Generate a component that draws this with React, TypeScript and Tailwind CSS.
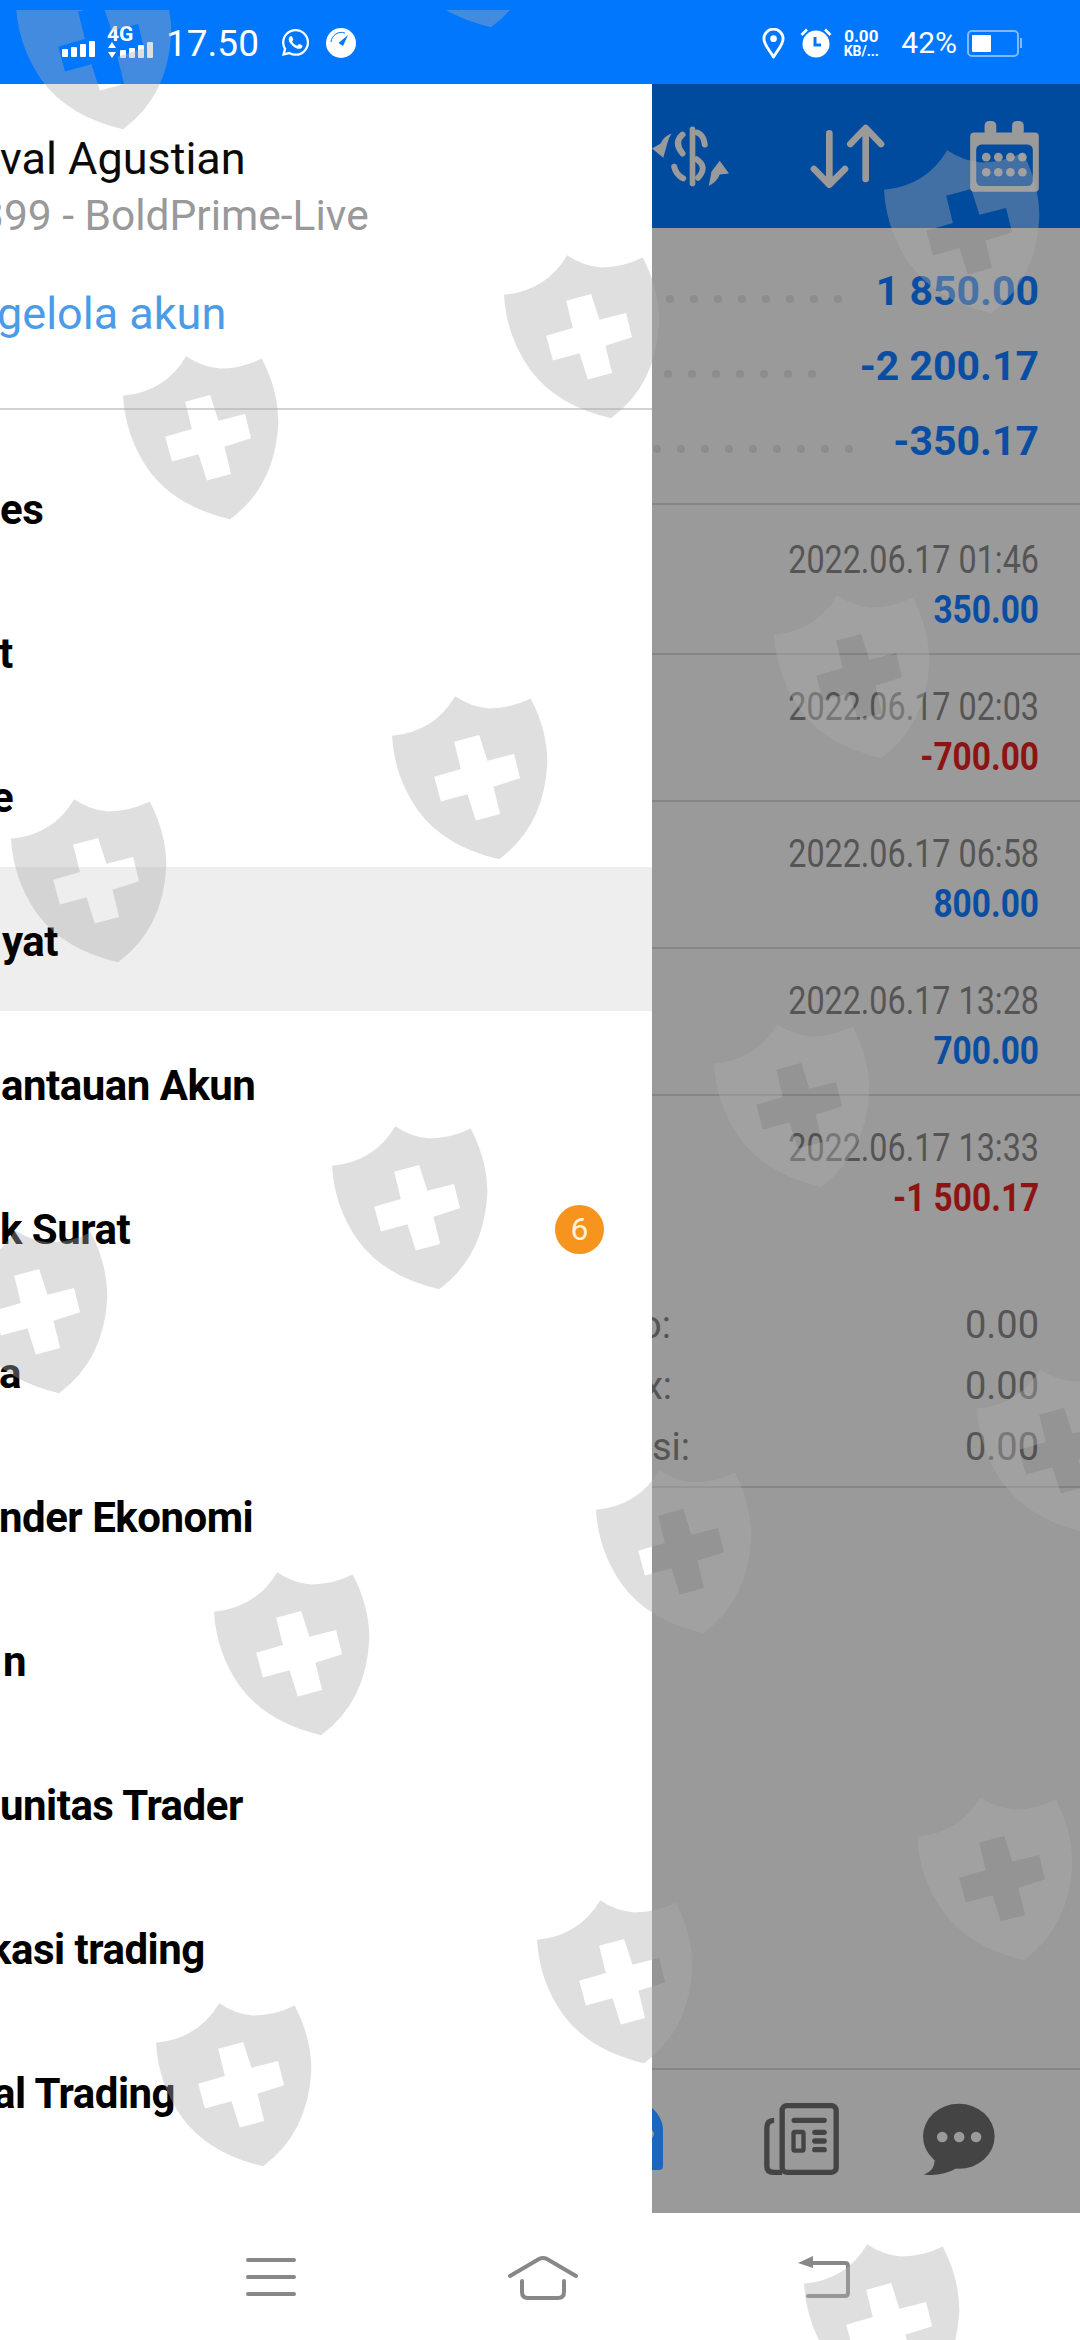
import React from "react";
import { IoLogoWhatsapp } from "react-icons/io5";

const shields = [
  { left: 15, top: -35 },
  { left: 383, top: -137 },
  { left: 503, top: 254 },
  { left: 122, top: 355 },
  { left: 883, top: 149 },
  { left: 773, top: 594 },
  { left: 391, top: 695 },
  { left: 10, top: 798 },
  { left: 713, top: 1023 },
  { left: 331, top: 1125 },
  { left: -49, top: 1229 },
  { left: 595, top: 1469 },
  { left: 976, top: 1368 },
  { left: 213, top: 1571 },
  { left: 916, top: 1796 },
  { left: 536, top: 1899 },
  { left: 155, top: 2002 },
  { left: 803, top: 2243 },
];

const menu = [
  { label: "es", offset: "ml-0" },
  { label: "t", offset: "ml-[-1px]" },
  { label: "e", offset: "ml-[-9px]" },
  { label: "yat", offset: "ml-[2px]" },
  { label: "antauan Akun", offset: "ml-[1px]" },
  { label: "k Surat", offset: "ml-0", badge: 6 },
  { label: "a", offset: "ml-[-1px]" },
  { label: "nder Ekonomi", offset: "ml-[-1px]" },
  { label: "n", offset: "ml-[3px]" },
  { label: "unitas Trader", offset: "ml-0" },
  { label: "kasi trading", offset: "ml-[-11px]" },
  { label: "al Trading", offset: "ml-[-7px]" },
];

const deals = [
  { time: "2022.06.17 01:46", value: "350.00", red: false },
  { time: "2022.06.17 02:03", value: "-700.00", red: true },
  { time: "2022.06.17 06:58", value: "800.00", red: false },
  { time: "2022.06.17 13:28", value: "700.00", red: false },
  { time: "2022.06.17 13:33", value: "-1 500.17", red: true },
];

const SignalBars = ({ heights }: { heights: number[] }) => (
  <div className="flex items-end gap-[3px]">
    {heights.map((h, i) => (
      <div key={i} className="w-[6px] bg-white rounded-[1px]" style={{ height: h }} />
    ))}
  </div>
);

const Dots = ({ count, offset }: { count: number; offset: string }) => (
  <div className={`flex gap-[16px] mt-[14px] ${offset}`}>
    {Array.from({ length: count }).map((_, i) => (
      <div key={i} className="w-[8px] h-[8px] rounded-full bg-[#8d8d8d]" />
    ))}
  </div>
);

const StatusBar = () => (
  <div className="h-[84px] shrink-0 bg-[#0177fe] flex items-center text-white pl-[62px] pr-[58px]">
    <div className="mt-[14px]">
      <SignalBars heights={[8, 10, 13, 16]} />
    </div>
    <div className="relative w-[46px] h-[34px] ml-[12px] mt-[-2px]">
      <span className="absolute left-0 top-[-2px] text-[21px] leading-[24px] font-bold">4G</span>
      <svg viewBox="0 0 10 18" className="absolute left-0 bottom-[-1px] w-[10px] h-[18px]" fill="white">
        <path d="M5 1 9 7H1Z" />
        <path d="M5 17 9 11H1Z" />
      </svg>
      <div className="absolute left-[13px] bottom-0">
        <SignalBars heights={[8, 10, 13, 16]} />
      </div>
    </div>
    <span className="text-[37px] leading-none ml-[13px] mt-[2px]">17.50</span>
    <IoLogoWhatsapp className="ml-[21px] text-[31px] mt-[1px]" />
    <svg viewBox="0 0 30 30" className="ml-[15px] w-[30px] h-[30px] mt-[1px]">
      <circle cx="15" cy="15" r="15" fill="white" />
      <path d="M22 7 17 18 12.5 15Z" fill="#0177fe" />
      <path d="M5 14A10.5 10.5 0 0 1 19 5" stroke="#0177fe" strokeWidth="1" fill="none" />
    </svg>

    <div className="ml-auto flex items-center mt-[2px]">
      <svg viewBox="0 0 24 32" className="w-[23px] h-[31px]" fill="none" stroke="white" strokeWidth="3">
        <path d="M12 30C7 22 2 17 2 11A10 10 0 0 1 22 11C22 17 17 22 12 30Z" strokeLinejoin="round" />
        <circle cx="12" cy="11" r="3.5" fill="white" stroke="none" />
      </svg>
      <svg viewBox="0 0 32 30" className="ml-[15px] w-[32px] h-[30px]">
        <circle cx="16" cy="16" r="13.5" fill="white" />
        <path d="M15 9v8h6" stroke="#0177fe" strokeWidth="3" fill="none" />
        <path d="M1.5 7 7 1.5M30.5 7 25 1.5" stroke="white" strokeWidth="2.5" />
      </svg>
      <div className="ml-[10px] w-[38px] flex flex-col items-center font-bold">
        <span className="text-[17px] leading-[16px]">0.00</span>
        <span className="text-[14px] leading-[14px] whitespace-nowrap">KB/...</span>
      </div>
      <span className="ml-[21px] text-[30px] leading-none">42%</span>
      <div className="ml-[10px] flex items-center">
        <div className="w-[52px] h-[27px] rounded-[5px] border-2 border-[#7fbaff] p-[3px]">
          <div className="w-[19px] h-full bg-white rounded-[1px]" />
        </div>
        <div className="w-[2px] h-[10px] ml-[1px] bg-[#7fbaff]" />
      </div>
    </div>
  </div>
);

const Drawer = () => (
  <div className="w-[652px] shrink-0 bg-white overflow-hidden">
    <div className="h-[326px] border-b-2 border-[#d2d2d2] whitespace-nowrap">
      <div className="text-[45px] leading-[50px] text-[#0a0a0a] pt-[50px]">val Agustian</div>
      <div className="text-[42.5px] leading-[50px] text-[#999999] mt-[7px] ml-[-20px]">399 - BoldPrime-Live</div>
      <div className="text-[45px] leading-[50px] text-[#4a9ce8] mt-[48px] ml-[-3px]">gelola akun</div>
    </div>
    <div className="pt-[25px]">
      {menu.map((item, i) => (
        <div
          key={item.label}
          className={`h-[144px] pt-[4px] flex items-center justify-between pr-[48px] ${i === 3 ? "bg-[#eeeeee]" : ""}`}
        >
          <span className={`text-[42px] tracking-[-0.5px] font-bold text-black whitespace-nowrap ${item.offset}`}>
            {item.label}
          </span>
          {item.badge && (
            <span className="w-[49px] h-[49px] rounded-full bg-[#f7941d] text-[#fff3d6] text-[32px] flex items-center justify-center">
              {item.badge}
            </span>
          )}
        </div>
      ))}
    </div>
  </div>
);

const ToolbarIcons = () => (
  <div className="h-[144px] shrink-0 bg-[#014b9f] flex items-center">
    <svg viewBox="36 370 235 185" className="w-[78px] h-[62px]" fill="none" stroke="#9a9a9a" strokeLinecap="round">
      <path d="M158 382V545" strokeWidth="17" />
      <path d="M172 392Q192 400 195 428M128 398Q100 422 128 455M170 472Q205 495 175 528M103 495Q108 518 130 530" strokeWidth="18" />
      <path d="M95 395Q70 405 62 425L36 440 70 468 82 425Q85 410 95 395Z" fill="#9a9a9a" stroke="none" />
      <path d="M207 552Q232 540 240 518L268 515 240 477 215 510Q212 530 207 552Z" fill="#9a9a9a" stroke="none" />
    </svg>
    <svg viewBox="505 370 225 195" className="ml-[80px] w-[75px] h-[65px]" fill="none" stroke="#9a9a9a" strokeWidth="20" strokeLinecap="round" strokeLinejoin="round">
      <path d="M563 398V550M517 505 563 552 610 505" />
      <path d="M672 535V384M626 430 672 382 718 430" />
    </svg>
    <svg viewBox="985 358 205 212" className="ml-[85px] w-[69px] h-[71px]">
      <rect x="1028" y="358" width="35" height="45" rx="14" fill="#9a9a9a" />
      <rect x="1110" y="358" width="35" height="45" rx="14" fill="#9a9a9a" />
      <rect x="985" y="392" width="205" height="177" rx="12" fill="#9a9a9a" />
      <rect x="1003" y="428" width="169" height="124" rx="16" fill="#014b9f" />
      {[1033, 1069, 1105, 1141].map((x) => (
        <React.Fragment key={x}>
          <circle cx={x} cy="466" r="13" fill="#9a9a9a" />
          <circle cx={x} cy="511" r="13" fill="#9a9a9a" />
        </React.Fragment>
      ))}
    </svg>
  </div>
);

const Account = () => (
  <div className="flex-1 min-w-0 bg-[#9a9a9a] flex flex-col overflow-hidden">
    <ToolbarIcons />
    <div className="h-[277px] shrink-0 border-b-2 border-[#868686] pt-[26px] pr-[41px] font-bold text-[41px] text-[#0a4ea3]">
      <div className="h-[75px] flex items-center justify-between">
        <Dots count={8} offset="ml-[14px] mt-[14px]" />
        <span>1 850.00</span>
      </div>
      <div className="h-[75px] flex items-center justify-between">
        <Dots count={7} offset="ml-[12px] mt-[14px]" />
        <span>-2 200.17</span>
      </div>
      <div className="h-[75px] flex items-center justify-between">
        <Dots count={9} offset="ml-[1px] mt-[14px]" />
        <span>-350.17</span>
      </div>
    </div>
    {deals.map((deal, i) => (
      <div
        key={deal.time}
        className={`shrink-0 pr-[41px] flex flex-col items-end ${i === 0 ? "h-[150px] pt-[35px]" : "pt-[32px]"} ${
          i === 4 ? "h-[144px]" : "border-b-2 border-[#868686]"
        } ${i > 0 && i < 4 ? "h-[147px]" : ""}`}
      >
        <span className="text-[38px] leading-[40px] text-[#555555] whitespace-nowrap origin-right scale-x-[0.85]">
          {deal.time}
        </span>
        <span
          className={`text-[38px] leading-[50px] mt-[5px] font-bold whitespace-nowrap origin-right scale-x-[0.88] ${
            deal.red ? "text-[#8e1414]" : "text-[#0a4ea3]"
          }`}
        >
          {deal.value}
        </span>
      </div>
    ))}
    <div className="h-[248px] shrink-0 border-b-2 border-[#868686] pt-[55px] pr-[41px] text-[38px] text-[#555555]">
      <div className="h-[61px] flex items-center justify-between">
        <span className="ml-[-12px]">o:</span>
        <span>0.00</span>
      </div>
      <div className="h-[61px] flex items-center justify-between">
        <span className="ml-[-8px]">x:</span>
        <span>0.00</span>
      </div>
      <div className="h-[61px] flex items-center justify-between">
        <span>si:</span>
        <span>0.00</span>
      </div>
    </div>
    <div className="mt-auto h-[145px] shrink-0 border-t-2 border-[#868686] flex items-center pb-[5px]">
      <svg viewBox="0 0 11 62" className="w-[11px] h-[62px]">
        <path d="M0 0C7 6 11 14 11 22V58Q11 62 7 62H0V30Q4 26 0 22Z" fill="#1a66c0" />
      </svg>
      <svg viewBox="365 185 230 222" className="ml-[100px] w-[77px] h-[74px]" fill="none" stroke="#444444" strokeWidth="16">
        <rect x="422" y="196" width="162" height="200" rx="14" />
        <path d="M398 240Q376 240 376 262V378Q376 396 396 396H422" />
        <path d="M458 240H548M520 276H548M520 302H548M520 328H548" strokeLinecap="round" />
        <rect x="456" y="275" width="30" height="56" rx="4" strokeWidth="13" />
      </svg>
      <svg viewBox="845 185 220 222" className="ml-[83px] w-[73px] h-[74px]">
        <ellipse cx="953" cy="288" rx="108" ry="98" fill="#444444" />
        <path d="M880 360Q880 392 848 403Q900 410 945 385Z" fill="#444444" />
        <circle cx="903" cy="290" r="16" fill="#9a9a9a" />
        <circle cx="954" cy="290" r="16" fill="#9a9a9a" />
        <circle cx="1005" cy="290" r="16" fill="#9a9a9a" />
      </svg>
    </div>
  </div>
);

const NavBar = () => (
  <div className="h-[127px] shrink-0 bg-white flex items-center pl-[246px]">
    <svg viewBox="0 0 50 40" className="w-[50px] h-[40px]" stroke="#888888" strokeWidth="4" strokeLinecap="round">
      <path d="M2 3H48M2 20H48M2 37H48" />
    </svg>
    <svg viewBox="0 0 72 46" className="ml-[211px] w-[72px] h-[46px]" fill="none" stroke="#888888" strokeWidth="4" strokeLinecap="round" strokeLinejoin="round">
      <path d="M3 22 32 5Q36 3 40 5L69 22" />
      <path d="M15 27V38Q15 44 21 44H51Q57 44 57 38V27" />
    </svg>
    <svg viewBox="0 0 52 42" className="ml-[219px] w-[52px] h-[42px]" fill="none" stroke="#888888" strokeWidth="4">
      <path d="M14 7H47Q50 7 50 10V37Q50 40 47 40H10" strokeLinecap="round" />
      <path d="M0 7 15 0V12Z" fill="#888888" stroke="none" />
    </svg>
  </div>
);

const crossPath = "M280 215 300 297 220 320 240 395 320 373 345 452 418 432 398 350 478 325 460 252 380 272 355 195Z";
const shieldPath =
  "M283 78Q330 110 385 115Q450 115 510 85Q560 180 560 280Q550 470 415 568Q250 530 170 420Q100 320 93 197Q220 185 283 78Z";

// the watermark sits on top of everything, including the status bar
const Watermarks = () => (
  <>
    <div className="absolute inset-0 pointer-events-none overflow-hidden [clip-path:inset(10px_0_0_0)]">
      {shields.map((s, i) => (
        <svg key={i} viewBox="90 75 475 495" className="absolute w-[158px] h-[165px]" style={{ left: s.left, top: s.top }}>
          <path fillRule="evenodd" fill="rgba(173,173,173,0.39)" d={shieldPath + crossPath} />
        </svg>
      ))}
    </div>
    {/* over the dimmed panel the cross reads a little darker than the panel */}
    <div className="absolute inset-0 pointer-events-none overflow-hidden [clip-path:inset(228px_0_127px_652px)]">
      {shields.map((s, i) => (
        <svg key={i} viewBox="90 75 475 495" className="absolute w-[158px] h-[165px]" style={{ left: s.left, top: s.top }}>
          <path fill="rgba(0,0,0,0.035)" d={crossPath} />
        </svg>
      ))}
    </div>
  </>
);

export default function App() {
  return (
    <div className="relative w-[1080px] h-[2340px] flex flex-col overflow-hidden font-['Roboto',sans-serif]">
      <StatusBar />
      <div className="flex-1 min-h-0 flex">
        <Drawer />
        <Account />
      </div>
      <NavBar />
      <Watermarks />
    </div>
  );
}
